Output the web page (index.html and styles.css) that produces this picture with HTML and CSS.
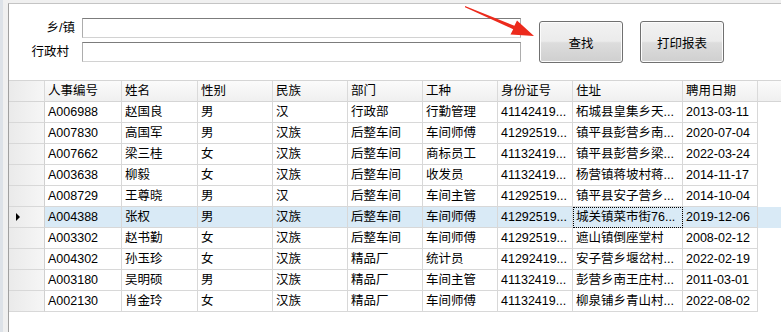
FILE: index.html
```html
<!DOCTYPE html>
<html lang="zh-CN">
<head>
    <meta charset="UTF-8">
    <title>人事查询</title>
    <link rel="stylesheet" href="styles.css">
</head>
<body>
    <div class="frame">
        <!-- Search form -->
        <div class="search">
            <div class="fields">
                <label class="lbl">乡/镇</label>
                <input class="box" type="text">
                <label class="lbl lbl-long">行政村</label>
                <input class="box" type="text">
            </div>
            <button class="btn btn-find">查找</button>
            <button class="btn">打印报表</button>
        </div>

        <!-- Staff grid -->
        <div class="grid">
            <div class="row head">
                <div class="cell rh"></div>
                <div class="cell">人事编号</div>
                <div class="cell">姓名</div>
                <div class="cell">性别</div>
                <div class="cell">民族</div>
                <div class="cell">部门</div>
                <div class="cell">工种</div>
                <div class="cell">身份证号</div>
                <div class="cell">住址</div>
                <div class="cell">聘用日期</div>
                <div class="cell fill"></div>
            </div>
            <div class="row">
                <div class="cell rh"></div>
                <div class="cell">A006988</div><div class="cell">赵国良</div><div class="cell">男</div><div class="cell">汉</div>
                <div class="cell">行政部</div><div class="cell">行勤管理</div><div class="cell">41142419...</div>
                <div class="cell">柘城县皇集乡天...</div><div class="cell">2013-03-11</div>
            </div>
            <div class="row">
                <div class="cell rh"></div>
                <div class="cell">A007830</div><div class="cell">高国军</div><div class="cell">男</div><div class="cell">汉族</div>
                <div class="cell">后整车间</div><div class="cell">车间师傅</div><div class="cell">41292519...</div>
                <div class="cell">镇平县彭营乡南...</div><div class="cell">2020-07-04</div>
            </div>
            <div class="row">
                <div class="cell rh"></div>
                <div class="cell">A007662</div><div class="cell">梁三桂</div><div class="cell">女</div><div class="cell">汉族</div>
                <div class="cell">后整车间</div><div class="cell">商标员工</div><div class="cell">41132419...</div>
                <div class="cell">镇平县彭营乡梁...</div><div class="cell">2022-03-24</div>
            </div>
            <div class="row">
                <div class="cell rh"></div>
                <div class="cell">A003638</div><div class="cell">柳毅</div><div class="cell">女</div><div class="cell">汉族</div>
                <div class="cell">后整车间</div><div class="cell">收发员</div><div class="cell">41132419...</div>
                <div class="cell">杨营镇蒋坡村蒋...</div><div class="cell">2014-11-17</div>
            </div>
            <div class="row">
                <div class="cell rh"></div>
                <div class="cell">A008729</div><div class="cell">王尊晓</div><div class="cell">男</div><div class="cell">汉</div>
                <div class="cell">后整车间</div><div class="cell">车间主管</div><div class="cell">41292519...</div>
                <div class="cell">镇平县安子营乡...</div><div class="cell">2014-10-04</div>
            </div>
            <div class="row selected">
                <div class="cell rh"><span class="pointer"></span></div>
                <div class="cell">A004388</div><div class="cell">张权</div><div class="cell">男</div><div class="cell">汉族</div>
                <div class="cell">后整车间</div><div class="cell">车间师傅</div><div class="cell">41292519...</div>
                <div class="cell focus">城关镇菜市街76...</div><div class="cell">2019-12-06</div>
            </div>
            <div class="row">
                <div class="cell rh"></div>
                <div class="cell">A003302</div><div class="cell">赵书勤</div><div class="cell">女</div><div class="cell">汉族</div>
                <div class="cell">后整车间</div><div class="cell">车间师傅</div><div class="cell">41292519...</div>
                <div class="cell">遮山镇倒座堂村</div><div class="cell">2008-02-12</div>
            </div>
            <div class="row">
                <div class="cell rh"></div>
                <div class="cell">A004302</div><div class="cell">孙玉珍</div><div class="cell">女</div><div class="cell">汉族</div>
                <div class="cell">精品厂</div><div class="cell">统计员</div><div class="cell">41292419...</div>
                <div class="cell">安子营乡堰岔村...</div><div class="cell">2022-02-19</div>
            </div>
            <div class="row">
                <div class="cell rh"></div>
                <div class="cell">A003180</div><div class="cell">吴明硕</div><div class="cell">男</div><div class="cell">汉族</div>
                <div class="cell">精品厂</div><div class="cell">车间主管</div><div class="cell">41132419...</div>
                <div class="cell">彭营乡南王庄村...</div><div class="cell">2011-03-01</div>
            </div>
            <div class="row">
                <div class="cell rh"></div>
                <div class="cell">A002130</div><div class="cell">肖金玲</div><div class="cell">女</div><div class="cell">汉族</div>
                <div class="cell">精品厂</div><div class="cell">车间师傅</div><div class="cell">41132419...</div>
                <div class="cell">柳泉铺乡青山村...</div><div class="cell">2022-08-02</div>
            </div>
        </div>
    </div>

    <!-- Red annotation arrow -->
    <svg class="arrow" width="781" height="332" viewBox="0 0 781 332">
        <polygon points="465,6 514.4,25.8 517,20.5 534,36 510.5,34.5 513.2,29.2 465,7.2" fill="#ec2a1c"/>
    </svg>
</body>
</html>
```

FILE: styles.css
```css
body {
    margin: 0;
    height: 332px;
    overflow: hidden;
    font-family: "Liberation Sans", "Noto Sans CJK SC", sans-serif;
    font-size: 12.5px;
    color: #000;
    background: linear-gradient(to right, #dde2e8 3px, #f0f0f0 3px);
}

.frame {
    margin: 3px 0 0 8px;
    height: 329px;
    border-top: 1px solid #c4c4c4;
    border-left: 1px solid #a0a0a0;
    background: #fff;
}

/* search form */
.search {
    display: flex;
    align-items: flex-start;
    height: 76px;
    box-sizing: border-box;
    padding-top: 14px;
}

.fields {
    display: grid;
    grid-template-columns: 66px 439px;
    column-gap: 7px;
    row-gap: 4px;
    align-items: center;
}

.lbl {
    text-align: right;
    line-height: 20px;
}

.lbl-long {
    padding-right: 6px;
}

.box {
    height: 20px;
    margin: 0;
    padding: 0 3px;
    box-sizing: border-box;
    border: 1px solid #adadad;
    border-top-color: #7c7c7c;
    border-bottom-color: #d2d2d2;
    background: #fff;
    font: inherit;
}

.btn {
    width: 84px;
    height: 42px;
    margin: 3px 0 0 17px;
    padding: 0;
    border: 1px solid #707070;
    border-radius: 3px;
    background: linear-gradient(#f2f2f2, #ebebeb 48%, #dddddd 52%, #cfcfcf);
    box-shadow: inset 0 0 0 1px #fcfcfc;
    font: inherit;
    color: #000;
}

.btn-find {
    margin-left: 18px;
}

/* grid */
.grid {
    border-top: 1px solid #d5d5d5;
}

.row {
    display: grid;
    grid-template-columns: 36px 77px 76px 75px 75px 75px 75px 75px 110px 75px 1fr;
    height: 21px;
}

.cell {
    box-sizing: border-box;
    border-right: 1px solid #d8d8d8;
    border-bottom: 1px solid #d8d8d8;
    padding-left: 3px;
    line-height: 20px;
    white-space: nowrap;
    overflow: hidden;
}

.head {
    background: linear-gradient(#fbfbfb, #efefef);
}

.head .cell {
    border-right-color: #dadada;
    border-bottom-color: #d5d5d5;
}

.head .fill {
    border-right: none;
}

.rh {
    position: relative;
    background: linear-gradient(to right, #eaeaea, #f6f6f6);
    border-right-color: #d0d0d0;
}

.selected {
    background: #d9eaf6;
}

.selected .rh {
    background: linear-gradient(to right, #eaeaea, #f6f6f6);
}

.pointer {
    position: absolute;
    left: 7px;
    top: 6px;
    border-left: 4px solid #000;
    border-top: 4px solid transparent;
    border-bottom: 4px solid transparent;
}

.focus {
    outline: 1px dotted #000;
    outline-offset: -1px;
}

.arrow {
    position: absolute;
    left: 0;
    top: 0;
    pointer-events: none;
}
```
